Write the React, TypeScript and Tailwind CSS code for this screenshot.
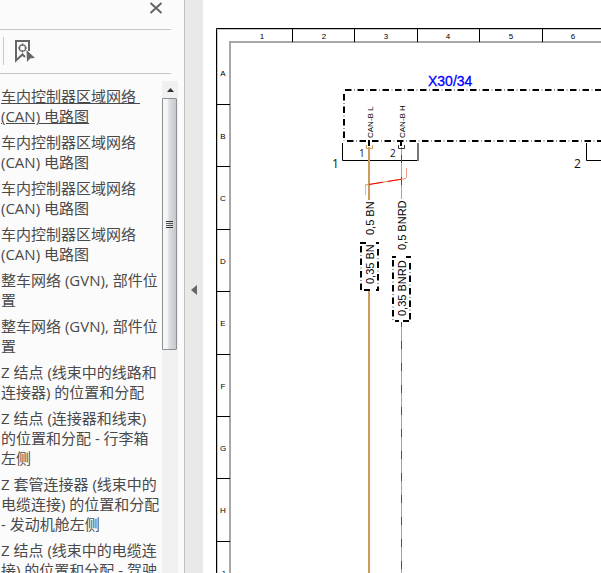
import { useState } from 'react';

// lines are broken the way the bookmark panel wraps them
const BOOKMARKS = [
  '车内控制器区域网络 \n(CAN) 电路图',
  '车内控制器区域网络\n(CAN) 电路图',
  '车内控制器区域网络\n(CAN) 电路图',
  '车内控制器区域网络\n(CAN) 电路图',
  '整车网络 (GVN), 部件位\n置',
  '整车网络 (GVN), 部件位\n置',
  'Z 结点 (线束中的线路和\n连接器) 的位置和分配',
  'Z 结点 (连接器和线束)\n的位置和分配 - 行李箱\n左侧',
  'Z 套管连接器 (线束中的\n电缆连接) 的位置和分配\n- 发动机舱左侧',
  'Z 结点 (线束中的电缆连\n接) 的位置和分配 - 驾驶',
];

const COLUMNS = [
  { label: '1', x: 59, tick: 89.5 },
  { label: '2', x: 121, tick: 151.5 },
  { label: '3', x: 183, tick: 214.5 },
  { label: '4', x: 245, tick: 276.5 },
  { label: '5', x: 308, tick: 339.5 },
  { label: '6', x: 370, tick: 401.5 },
];

const ROWS = [
  { label: 'A', y: 76, tick: 104.5 },
  { label: 'B', y: 139, tick: 166.5 },
  { label: 'C', y: 201, tick: 229.5 },
  { label: 'D', y: 264, tick: 291.5 },
  { label: 'E', y: 326, tick: 354.5 },
  { label: 'F', y: 389, tick: 416.5 },
  { label: 'G', y: 451, tick: 478.5 },
  { label: 'H', y: 513, tick: 541.5 },
  { label: 'J', y: 576, tick: 603.5 },
];

function BookmarkIcon() {
  return (
    <svg width="22" height="24" viewBox="0 0 22 24" fill="none">
      <path d="M11 18 L8.5 15.5 L2 21.5 V2 H15 V12" stroke="#666" strokeWidth="2" />
      <circle cx="8.5" cy="9" r="3.2" stroke="#666" strokeWidth="1.3" />
      <path d="M8.5 4.5 V7 M8.5 11 V13.5 M4 9 H6.5 M10.5 9 H13" stroke="#666" strokeWidth="1.2" />
      <path d="M12.5 11 L21 19 L16.5 19.2 L13 23 Z" fill="#666" />
    </svg>
  );
}

function Scrollbar() {
  return (
    <div className="mt-[7px] flex w-4 shrink-0 flex-col bg-[#f0f0f0]">
      <button type="button" aria-label="Scroll up" className="flex h-[17px] w-4 shrink-0 items-center justify-center">
        <svg width="7" height="4" viewBox="0 0 7 4">
          <path d="M3.5 0 L7 4 H0 Z" fill="#333" />
        </svg>
      </button>
      <div className="flex h-[252px] w-[15px] flex-col items-center justify-center gap-px rounded-[1px] border border-[#8b8f96] bg-linear-to-r from-[#f6f6f7] from-30% via-[#dcdde1] via-50% to-[#c4c7ce]">
        <div className="h-px w-[7px] bg-[#333]" />
        <div className="h-px w-[7px] bg-[#555]" />
        <div className="h-px w-[7px] bg-[#555]" />
        <div className="h-px w-[7px] bg-[#333]" />
      </div>
    </div>
  );
}

interface WireTextProps {
  x: number;
  y: number;
  size: number;
  children: string;
}

// text that runs upwards along a wire
function WireText({ x, y, size, children }: WireTextProps) {
  return (
    <text transform={`translate(${x} ${y}) rotate(-90)`} fontSize={size} fill="#000">
      {children}
    </text>
  );
}

// dash-dot outline: bold black dashes with a faint dot in each gap
function DashDot({ d }: { d: string }) {
  return (
    <>
      <path d={d} stroke="#000" strokeWidth="2" strokeDasharray="6.5 6" />
      <path d={d} stroke="#999" strokeWidth="2" strokeDasharray="1 11.5" strokeDashoffset="-9" />
    </>
  );
}

function Diagram() {
  return (
    <svg className="block h-full w-full font-['Liberation_Sans',sans-serif]" fill="none">
      {/* Sheet frame */}
      <path d="M14.5 2000 V29.5 H2000" stroke="#c8c8c8" />
      <path d="M13.5 2000 V28.5 H2000" stroke="#000" />
      <path d="M27 2000 V42 H2000" stroke="#a8a8a8" strokeWidth="2" />
      {COLUMNS.map((col) => (
        <g key={col.label}>
          <path d={`M${col.tick} 29 V42`} stroke="#000" />
          <text x={col.x} y="39" fontSize="8" textAnchor="middle" fill="#000">
            {col.label}
          </text>
        </g>
      ))}
      {ROWS.map((row) => (
        <g key={row.label}>
          <path d={`M14 ${row.tick} H27`} stroke="#000" />
          <text x="20" y={row.y} fontSize="8" textAnchor="middle" fill="#000">
            {row.label}
          </text>
        </g>
      ))}

      {/* Control unit X30/34 */}
      <text x="225" y="86" fontSize="14" fill="#0000ff" stroke="#0000ff" strokeWidth="0.3">
        X30/34
      </text>
      <DashDot d="M142 90 H2000" />
      <DashDot d="M144 141 H2000" />
      <DashDot d="M141 94 V141" />

      {/* Connector brackets */}
      <path d="M139.5 143 V160.5 H214.5" stroke="#000" />
      <path d="M215 143 V161" stroke="#777" strokeWidth="2" />
      <path d="M383.5 143 V160.5 H2000" stroke="#000" />
      <g className="font-['Open_Sans',sans-serif]" fill="#111">
        <text x="129" y="168" fontSize="12">1</text>
        <text x="371" y="168" fontSize="12">2</text>
        <text x="156" y="157" fontSize="10">1</text>
        <text x="187" y="157" fontSize="10">2</text>
      </g>

      {/* CAN-B L */}
      <WireText x={170} y={138} size={8}>CAN-B L</WireText>
      <path d="M166 147 V200 M166 290 V2000" stroke="#cc9b5e" strokeWidth="2" />
      <path d="M163.5 145 V148.5 H169.5 V145" stroke="#cc9b5e" />
      <path d="M166 140 V146" stroke="#000" strokeWidth="2" />
      <WireText x={171} y={235} size={11}>0,5 BN</WireText>
      <WireText x={171} y={284} size={11}>0,35 BN</WireText>
      <DashDot d="M158 246 V290" />
      <DashDot d="M175 249 V290" />
      <path d="M157 243 H163 M173 243 H176 M161 290 H167 M173 290 H176" stroke="#000" strokeWidth="2" />

      {/* CAN-B H */}
      <WireText x={202} y={138} size={8}>CAN-B H</WireText>
      <path d="M198.5 147 V199 M198.5 322 V2000" stroke="#cc9b5e" />
      <path d="M198.5 155 V199" stroke="#f00" strokeDasharray="8 14" />
      <path d="M198.5 322 V2000" stroke="#e01010" strokeDasharray="8 14" strokeDashoffset="3" />
      <path d="M195.5 145 V148.5 H201.5 V145" stroke="#333" />
      <path d="M198 140 V146" stroke="#000" strokeWidth="2" />
      <WireText x={203} y={250} size={11}>0,5 BNRD</WireText>
      <WireText x={203} y={316} size={11}>0,35 BNRD</WireText>
      <DashDot d="M190 260 V321" />
      <DashDot d="M207 263 V321" />
      <path d="M189 257 H193 M203 257 H208 M192 321 H196 M200 321 H206" stroke="#000" strokeWidth="2" />

      {/* Twisted pair marker */}
      <path d="M162.5 195 V185" stroke="#e3b28e" />
      <path d="M203.5 178 V168" stroke="#f2a08c" />
      <path d="M162 185 L203 178.5" stroke="#cc9b5e" />
      <path d="M166 184.5 L203 178.5" stroke="#f00" strokeDasharray="14 5" />
    </svg>
  );
}

export default function App() {
  const [selected, setSelected] = useState(0);
  const [isOpen, setIsOpen] = useState(true);

  return (
    <div className="flex h-screen overflow-hidden bg-white">
      {isOpen && (
        <aside className="flex w-[184px] shrink-0 flex-col bg-[#fbfbfb] font-['Open_Sans','Noto_Sans_CJK_SC',sans-serif]">
          {/* Header */}
          <div className="mr-[13px] flex h-[30px] justify-end border-b border-[#c8c8c8] pt-0.5 pr-2">
            <button type="button" aria-label="Close" onClick={() => setIsOpen(false)} className="h-3 w-3.5">
              <svg width="14" height="12" viewBox="0 0 14 12">
                <path d="M1.5 1 L12.5 11 M12.5 1 L1.5 11" stroke="#666" strokeWidth="2" />
              </svg>
            </button>
          </div>

          {/* Toolbar */}
          <div className="mr-[13px] flex h-[45px] items-center border-b border-[#c8c8c8] pl-[3px]">
            <div className="h-7 w-px bg-[#c8c8c8]" />
            <button type="button" aria-label="Find current bookmark" className="ml-2.5">
              <BookmarkIcon />
            </button>
          </div>

          {/* Bookmarks */}
          <div className="flex min-h-0 grow">
            <ul className="flex w-[162px] flex-col gap-1.5 overflow-hidden pt-3 pl-px">
              {BOOKMARKS.map((title, i) => (
                <li key={i} className="shrink-0">
                  <a
                    href={`#bookmark-${i}`}
                    onClick={() => setSelected(i)}
                    className={`block text-[15px] leading-5 whitespace-pre text-[#4a4a4a] ${
                      i === selected ? 'underline' : ''
                    }`}
                  >
                    {title}
                  </a>
                </li>
              ))}
            </ul>
            <Scrollbar />
          </div>
        </aside>
      )}

      {/* Splitter */}
      <button
        type="button"
        aria-label="Toggle bookmark panel"
        onClick={() => setIsOpen(!isOpen)}
        className="flex w-[19px] shrink-0 items-center justify-center border-l border-[#c0c0c0] bg-[#e9e9e9] pt-1.5"
      >
        <svg width="6" height="10" viewBox="0 0 6 10">
          <path d="M6 0 V10 L0 5 Z" fill="#666" />
        </svg>
      </button>

      <main className="min-w-0 grow">
        <Diagram />
      </main>
    </div>
  );
}
